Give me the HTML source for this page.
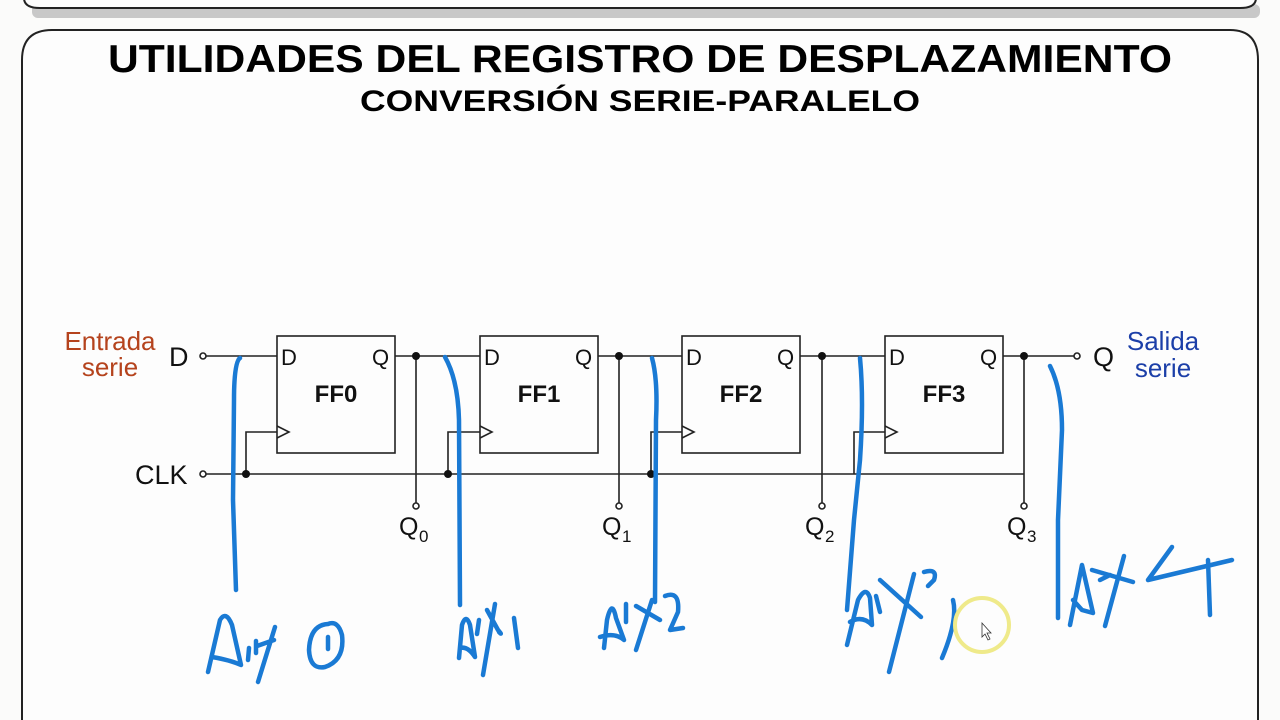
<!DOCTYPE html>
<html><head><meta charset="utf-8"><style>
html,body{margin:0;padding:0;background:#fbfbfa;width:1280px;height:720px;overflow:hidden}
svg{display:block}
</style></head><body>
<svg width="1280" height="720" viewBox="0 0 1280 720" xmlns="http://www.w3.org/2000/svg" font-family="Liberation Sans, Arial, sans-serif">
<rect width="1280" height="720" fill="#fbfbfa"/>
<rect x="32" y="4" width="1228" height="14" rx="6" fill="#c8c8c8"/>
<path d="M24 -10 L24 -2 Q24 8 40 8 L1240 8 Q1256 8 1256 -2 L1256 -10" fill="#fdfdfd" stroke="#222" stroke-width="2"/>
<path d="M22 730 L22 60 Q22 30 52 30 L1230 30 Q1258 30 1258 60 L1258 730" fill="#fdfdfd" stroke="#222" stroke-width="2"/>
<text x="108" y="72" font-size="39" font-weight="bold" fill="#000" textLength="1064" lengthAdjust="spacingAndGlyphs">UTILIDADES DEL REGISTRO DE DESPLAZAMIENTO</text>
<text x="360" y="111" font-size="30" font-weight="bold" fill="#000" textLength="560" lengthAdjust="spacingAndGlyphs">CONVERSIÓN SERIE-PARALELO</text>

<text x="110" y="350" text-anchor="middle" font-size="26" fill="#b5431d">Entrada</text>
<text x="110" y="376" text-anchor="middle" font-size="26" fill="#b5431d">serie</text>
<text x="1163" y="350" text-anchor="middle" font-size="26" fill="#1c3fa8">Salida</text>
<text x="1163" y="377" text-anchor="middle" font-size="26" fill="#1c3fa8">serie</text>
<text x="169" y="366" font-size="27" fill="#111">D</text>
<text x="135" y="484" font-size="27" fill="#111">CLK</text>
<text x="1093" y="366" font-size="27" fill="#111">Q</text>

<g stroke="#222" stroke-width="1.6" fill="none">
<circle cx="203" cy="356" r="3" fill="#fff"/>
<circle cx="203" cy="474" r="3" fill="#fff"/>
<circle cx="1077" cy="356" r="3" fill="#fff"/>
<line x1="206" y1="356" x2="277" y2="356"/>
<line x1="206" y1="474" x2="1024" y2="474"/>
<line x1="1003" y1="356" x2="1074" y2="356"/>
<rect x="277" y="336" width="118" height="117"/>
<rect x="480" y="336" width="118" height="117"/>
<rect x="682" y="336" width="118" height="117"/>
<rect x="885" y="336" width="118" height="117"/>
<path d="M277 426 L289 432 L277 438"/><path d="M480 426 L492 432 L480 438"/><path d="M682 426 L694 432 L682 438"/><path d="M885 426 L897 432 L885 438"/>
<path d="M246 474 L246 432 L277 432"/><path d="M448 474 L448 432 L480 432"/><path d="M651 474 L651 432 L682 432"/><path d="M854 474 L854 432 L885 432"/>
<line x1="395" y1="356" x2="480" y2="356"/><line x1="598" y1="356" x2="682" y2="356"/><line x1="800" y1="356" x2="885" y2="356"/>
<line x1="416" y1="356" x2="416" y2="503"/><line x1="619" y1="356" x2="619" y2="503"/><line x1="822" y1="356" x2="822" y2="503"/><line x1="1024" y1="356" x2="1024" y2="503"/>
<circle cx="416" cy="506" r="3" fill="#fff"/><circle cx="619" cy="506" r="3" fill="#fff"/><circle cx="822" cy="506" r="3" fill="#fff"/><circle cx="1024" cy="506" r="3" fill="#fff"/>
</g>
<g fill="#111">
<circle cx="246" cy="474" r="4"/><circle cx="448" cy="474" r="4"/><circle cx="651" cy="474" r="4"/>
<circle cx="416" cy="356" r="4"/><circle cx="619" cy="356" r="4"/><circle cx="822" cy="356" r="4"/><circle cx="1024" cy="356" r="4"/>
</g>
<g font-size="22" fill="#111">
<text x="281" y="365">D</text><text x="372" y="365">Q</text>
<text x="484" y="365">D</text><text x="575" y="365">Q</text>
<text x="686" y="365">D</text><text x="777" y="365">Q</text>
<text x="889" y="365">D</text><text x="980" y="365">Q</text>
</g>
<g font-size="24" font-weight="bold" fill="#111" text-anchor="middle">
<text x="336" y="402">FF0</text><text x="539" y="402">FF1</text><text x="741" y="402">FF2</text><text x="944" y="402">FF3</text>
</g>
<g font-size="25" fill="#111">
<text x="399" y="535">Q</text><text x="419" y="542" font-size="17">0</text>
<text x="602" y="535">Q</text><text x="622" y="542" font-size="17">1</text>
<text x="805" y="535">Q</text><text x="825" y="542" font-size="17">2</text>
<text x="1007" y="535">Q</text><text x="1027" y="542" font-size="17">3</text>
</g>

<g stroke="#1a7ad4" stroke-width="4.5" fill="none" stroke-linecap="round" stroke-linejoin="round">
<path d="M240 358 Q234 362 234 400 L233 500 L236 590"/>
<path d="M445 357 Q458 380 459 420 L460 605"/>
<path d="M652 358 Q658 380 656 420 L655 602"/>
<path d="M860 358 Q864 400 860 460 L854 520 L847 610"/>
<path d="M1050 366 Q1062 390 1062 430 L1058 520 L1058 618"/>
<!-- Aux0 -->
<path d="M208 672 L220 620 Q226 610 232 625 L241 665 Q230 660 212 657"/>
<path d="M249 648 L248 660 M256 641 L256 653"/>
<path d="M257 646 L274 640 M275 627 L258 682"/>
<path d="M328 624 Q310 625 309 650 Q310 670 325 667 Q345 660 342 635 Q338 620 328 624 M328 637 L328 649"/>
<!-- Aux1 -->
<path d="M459 658 L462 625 Q466 613 470 625 L475 657 Q468 646 460 648"/>
<path d="M479 620 L477 634"/>
<path d="M487 610 L498 630 Q503 636 499 632 M495 604 L483 675"/>
<path d="M514 618 L518 648"/>
<!-- Aux2 -->
<path d="M604 648 L607 620 Q612 598 616 618 L624 640 Q615 632 600 637"/>
<path d="M626 604 L626 622"/>
<path d="M636 606 L660 620 M652 600 L636 650"/>
<path d="M665 596 Q680 590 678 612 L670 630 L683 628"/>
<!-- Aux3 -->
<path d="M847 645 L858 600 Q866 585 870 598 L872 625 Q862 615 850 622"/>
<path d="M876 596 L880 612"/>
<path d="M880 580 L921 617 M914 574 L889 672"/>
<path d="M924 572 Q938 568 934 580 L928 586"/>
<path d="M953 600 Q958 620 942 658"/>
<!-- Aux4 -->
<path d="M1070 625 L1082 565 L1093 613 L1082 610 L1073 600"/>
<path d="M1100 580 L1110 575"/>
<path d="M1092 570 L1133 582 M1124 556 L1105 626"/>
<path d="M1172 547 L1148 580 L1232 560 M1208 560 L1210 615"/>
</g>
<circle cx="982" cy="625" r="27" fill="none" stroke="#efea8a" stroke-width="4"/>
<path d="M982 623 L982 637 L985 634 L988 640 L990 639 L987 633 L991 633 Z" fill="#fff" stroke="#333" stroke-width="0.8"/>
</svg>
</body></html>
